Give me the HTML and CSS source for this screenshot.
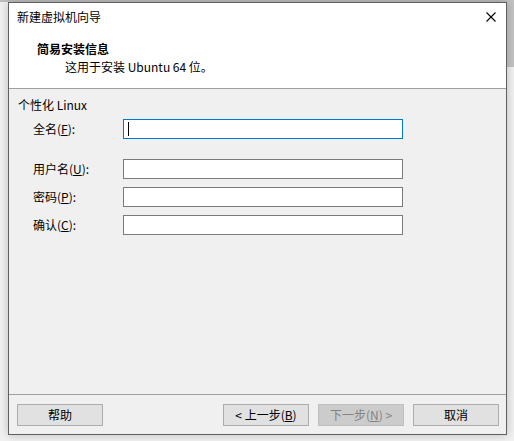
FILE: index.html
```html
<!DOCTYPE html>
<html lang="zh-CN">
<head>
<meta charset="utf-8">
<title>新建虚拟机向导</title>
<link rel="stylesheet" href="styles.css">
</head>
<body>
<div class="desk-top"></div>
<div class="desk-right"></div>
<div class="desktop">
  <div class="window">
    <div class="titlebar">
      <span class="title">新建虚拟机向导</span>
      <span class="close">
        <svg width="10" height="10" viewBox="0 0 10 10"><path d="M0.5 0.5 L9.5 9.5 M9.5 0.5 L0.5 9.5" stroke="#000" stroke-width="1.1" fill="none"/></svg>
      </span>
    </div>
    <div class="header">
      <div class="h-title">简易安装信息</div>
      <div class="h-sub">这用于安装 Ubuntu 64 位。</div>
    </div>
    <div class="content">
      <div class="group-label">个性化 Linux</div>
      <div class="form">
        <div class="row">
          <span class="label">全名(<u>F</u>):</span>
          <div class="field focused"><span class="caret"></span></div>
        </div>
        <div class="row gap-big">
          <span class="label">用户名(<u>U</u>):</span>
          <div class="field"></div>
        </div>
        <div class="row">
          <span class="label">密码(<u>P</u>):</span>
          <div class="field"></div>
        </div>
        <div class="row">
          <span class="label">确认(<u>C</u>):</span>
          <div class="field"></div>
        </div>
      </div>
    </div>
    <div class="footer">
      <div class="btn">帮助</div>
      <div class="spacer"></div>
      <div class="btn">&lt; 上一步(<u>B</u>)</div>
      <div class="btn disabled">下一步(<u>N</u>) &gt;</div>
      <div class="btn">取消</div>
    </div>
  </div>
</div>
</body>
</html>
```
FILE: styles.css
```css
* { box-sizing: border-box; }
html, body { margin: 0; padding: 0; }
body {
  width: 514px;
  height: 441px;
  overflow: hidden;
  background: #f1f1f1;
  font-family: "Noto Sans CJK SC", "Noto Sans", sans-serif;
  font-size: 12px;
  color: #000;
  position: relative;
}
.desk-top {
  position: absolute;
  left: 0; top: 0;
  width: 514px; height: 2px;
  background: #bdbdbd;
}
.desk-right {
  position: absolute;
  left: 506px; top: 0;
  width: 8px; height: 67px;
  background: #c2c2c2;
}
.desktop {
  position: relative;
  padding: 2px 0 0 8px;
}
.window {
  width: 499px;
  height: 433px;
  border: 1px solid #5f5f5f;
  background: #f0f0f0;
  box-shadow: 0 0 9px rgba(0,0,0,0.22);
  display: flex;
  flex-direction: column;
}
.titlebar {
  height: 27px;
  background: #fff;
  display: flex;
  align-items: center;
  padding-left: 8px;
  padding-right: 10px;
}
.title { flex: 1; line-height: 27px; }
.close { display: flex; width: 10px; height: 10px; }
.header {
  background: #fff;
  padding: 10px 0 12px 28px;
  border-bottom: 1px solid #a0a0a0;
}
.h-title { font-weight: bold; line-height: 18px; }
.h-sub { line-height: 18px; padding-left: 28px; }
.content {
  flex: 1;
  padding: 8px 0 0 9px;
}
.group-label { line-height: 16px; }
.form {
  padding-left: 15px;
  padding-top: 6px;
  display: flex;
  flex-direction: column;
  gap: 8px;
}
.row {
  display: flex;
  align-items: center;
  height: 20px;
}
.row.gap-big { margin-top: 12px; }
.label { width: 90px; line-height: 20px; }
.field {
  width: 280px;
  height: 20px;
  background: #fff;
  border: 1px solid #7a7a7a;
  position: relative;
}
.field.focused { border-color: #0078d7; }
.caret {
  position: absolute;
  left: 4px; top: 2px;
  width: 1px; height: 14px;
  background: #000;
}
u { text-decoration: underline; text-underline-offset: 1px; }
.footer {
  height: 40px;
  border-top: 1px solid #a0a0a0;
  display: flex;
  align-items: flex-start;
  padding: 9px 7px 0 8px;
  gap: 9px;
}
.spacer { flex: 1; }
.btn {
  width: 86px;
  height: 22px;
  background: #e1e1e1;
  border: 1px solid #adadad;
  display: flex;
  align-items: center;
  justify-content: center;
  line-height: 20px;
}
.btn.disabled {
  background: #cccccc;
  border-color: #bfbfbf;
  color: #838383;
}
```
